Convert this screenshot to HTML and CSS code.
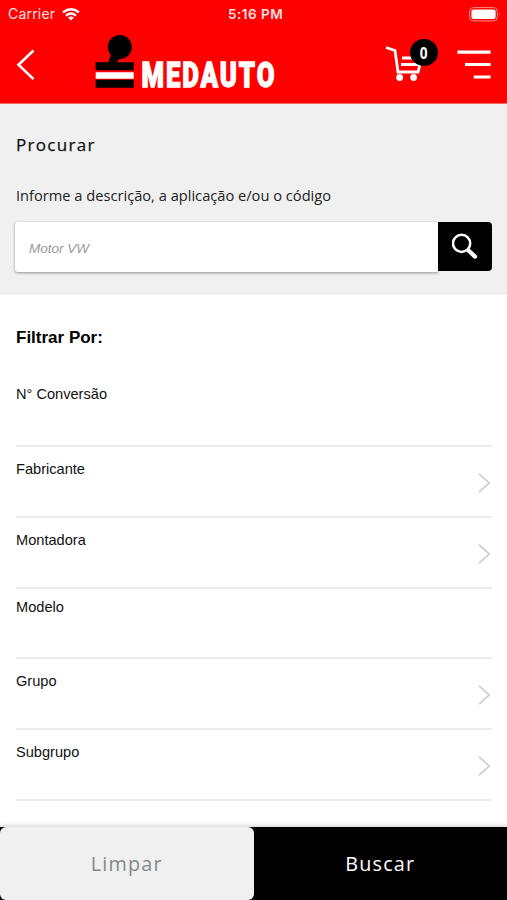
FILE: index.html
```html
<!DOCTYPE html>
<html lang="pt-BR">
<head>
<meta charset="utf-8">
<title>Medauto</title>
<link rel="stylesheet" href="styles.css">
</head>
<body>
<div class="app">
  <header class="header">
    <div class="status">
      <div class="carrier"><span>Carrier</span>
        <svg width="18" height="13" viewBox="0 0 18 13"><g fill="none" stroke="#fff" stroke-width="2.3"><path d="M1 4.4Q9-2 17 4.4"/><path d="M3.9 7.6Q9 3.4 14.1 7.6"/></g><path d="M6 9.6Q9 7.3 12 9.6L9 12.6Z" fill="#fff"/></svg>
      </div>
      <span class="time">5:16 PM</span>
      <svg class="battery" width="32" height="15" viewBox="0 0 32 15"><rect x=".6" y=".6" width="27.8" height="13.3" rx="3.8" fill="none" stroke="#ff8c8c"/><rect x="2.4" y="2.4" width="24.2" height="9.7" rx="2" fill="#fff"/><path d="M30 5.2q1.6 2 0 4z" fill="#ff8c8c"/></svg>
    </div>
    <div class="nav">
      <svg class="back" width="20" height="32" viewBox="0 0 20 32"><path d="M17.5 1.5 2.5 15.8l15 14.3" fill="none" stroke="#fff" stroke-width="2.6"/></svg>
      <svg class="logo" width="190" height="66" viewBox="0 0 190 66"><circle cx="25.8" cy="13" r="12"/><path d="M17 21 13.5 30h9.5Q22.5 25 29 24z"/><path d="M1.7 28.2h38v8.1h-38zM1.7 45.7h38v8h-38z"/><path d="M1.7 38.3h38v6.4h-38z" fill="#fff"/><text class="wordmark" x="47.4" y="53" textLength="135" lengthAdjust="spacingAndGlyphs">MEDAUTO</text></svg>
      <div class="cart">
        <svg width="40" height="36" viewBox="0 0 40 36"><path d="M1 2.5 10 5.5 13 27H33L37 11M17 13H35M16 19.5H35" fill="none" stroke="#fff" stroke-width="2.8"/><circle cx="14.6" cy="32.5" r="3.4" fill="#fff"/><circle cx="28.6" cy="32.5" r="3.4" fill="#fff"/></svg>
        <span class="badge"><span class="count">0</span></span>
      </div>
      <svg class="menu" width="34" height="30" viewBox="0 0 34 30"><path d="M.4 2.2H33.6M8 14.5H33.6M16.7 27H33.6" fill="none" stroke="#fff" stroke-width="3.2"/></svg>
    </div>
  </header>
  <section class="search">
    <h1>Procurar</h1>
    <label for="q">Informe a descrição, a aplicação e/ou o código</label>
    <div class="field">
      <input id="q" type="text" placeholder="Motor VW">
      <button aria-label="Buscar"><svg width="27" height="27" viewBox="0 0 27 27"><circle cx="9.6" cy="10.4" r="8.6" fill="none" stroke="#fff" stroke-width="2.5"/><path d="M16.5 17.5 23 23.6" stroke="#fff" stroke-width="4.2" stroke-linecap="round"/></svg></button>
    </div>
  </section>
  <main class="filters">
    <h2>Filtrar Por:</h2>
    <div class="row first"><span>N° Conversão</span></div>
    <div class="row"><span>Fabricante</span><svg class="chev" width="13" height="20" viewBox="0 0 13 20"><path d="M1 .8 11.2 10 1 19.2"/></svg></div>
    <div class="row"><span>Montadora</span><svg class="chev" width="13" height="20" viewBox="0 0 13 20"><path d="M1 .8 11.2 10 1 19.2"/></svg></div>
    <div class="row plain"><span>Modelo</span></div>
    <div class="row"><span>Grupo</span><svg class="chev" width="13" height="20" viewBox="0 0 13 20"><path d="M1 .8 11.2 10 1 19.2"/></svg></div>
    <div class="row"><span>Subgrupo</span><svg class="chev" width="13" height="20" viewBox="0 0 13 20"><path d="M1 .8 11.2 10 1 19.2"/></svg></div>
  </main>
  <footer class="actions">
    <button class="clear">Limpar</button>
    <button class="go">Buscar</button>
  </footer>
</div>
</body>
</html>
```
FILE: styles.css
```css
* { box-sizing: border-box; }
body { margin: 0; background: #fff; color: #111; font-family: "Liberation Sans", Arial, sans-serif; }
svg { display: block; flex: none; }
h1, h2 { margin: 0; }
button { border: 0; padding: 0; }
.app { height: 900px; display: flex; flex-direction: column; overflow: hidden; }
.header { height: 104px; background: #f00; flex: none; border-bottom: 1px solid #f66; }
.status { height: 28px; padding: 0 6px 0 8px; display: grid; grid-template-columns: 1fr auto 1fr; align-items: center; font: 14px/28px Inter, sans-serif; color: #ffe0e0; }
.carrier { display: flex; align-items: center; gap: 7px; letter-spacing: .2px; }
.time { font-weight: 600; font-size: 13.5px; letter-spacing: .5px; position: relative; left: 1px; }
.battery { justify-self: end; }
.nav { display: flex; padding: 0 16px; height: 75px; align-items: flex-start; }
.back { margin-top: 21px; }
.logo { margin: 6px 0 0 58px; overflow: visible; }
.wordmark { font: 900 34.5px Roboto, sans-serif; letter-spacing: 2.6px; fill: #fff; stroke: #fff; stroke-width: 1.3px; }
.cart { position: relative; margin: 17px 0 0 101px; }
.badge { position: absolute; left: 24.5px; top: -6.5px; width: 28px; height: 27px; border-radius: 50%; background: #000; color: #fff; font: 700 16px/28px "Open Sans", sans-serif; text-align: center; }
.count { display: inline-block; transform: scaleX(.85); }
.menu { margin: 22px 0 0 auto; }
.search { height: 191px; flex: none; background: #f0f0f0; padding: 28px 15px 0; font-family: "Open Sans", sans-serif; }
.search h1 { font-size: 17px; line-height: 26px; font-weight: 500; letter-spacing: 1.3px; padding-left: 1px; -webkit-text-stroke: .25px #111; }
.search label { display: block; margin-top: 24px; padding-left: 1px; font-size: 14.65px; line-height: 26px; color: #222; }
.field { display: flex; margin-top: 14px; height: 49px; width: 477px; }
.field input { flex: 1; min-width: 0; border: 0; border-radius: 3px 0 0 3px; height: 50px; padding: 3px 14px 0; background: #fff; box-shadow: 0 1px 3px rgba(0,0,0,.4); font: italic 13.5px "Liberation Sans", Arial, sans-serif; }
.field input::placeholder { color: #999; opacity: 1; }
.field button { width: 54px; background: #000; border-radius: 0 4px 4px 0; display: flex; align-items: center; justify-content: center; position: relative; }
.filters { flex: 1; padding: 0 15px 0 16px; }
.filters h2 { font-size: 17px; line-height: 24px; margin-top: 31px; color: #000; }
.row { height: 70.8px; padding-top: 12px; border-bottom: 2px solid #ececec; display: flex; justify-content: space-between; font-size: 14.6px; line-height: 20px; }
.row.first { height: 97.1px; padding-top: 34px; }
.row.plain { padding-top: 8px; }
.chev { margin: 14px 1px 0 0; fill: none; stroke: #ccc; stroke-width: 1.6; }
.actions { display: flex; height: 73px; flex: none; background: #000; box-shadow: 0 -1px 5px rgba(0,0,0,.2); }
.actions button { flex: 1; font: 19.8px "Open Sans", sans-serif; letter-spacing: 1.2px; }
.clear { background: #f0f0f0; color: #888; border-radius: 6px; }
.go { background: #000; color: #fff; }
```
